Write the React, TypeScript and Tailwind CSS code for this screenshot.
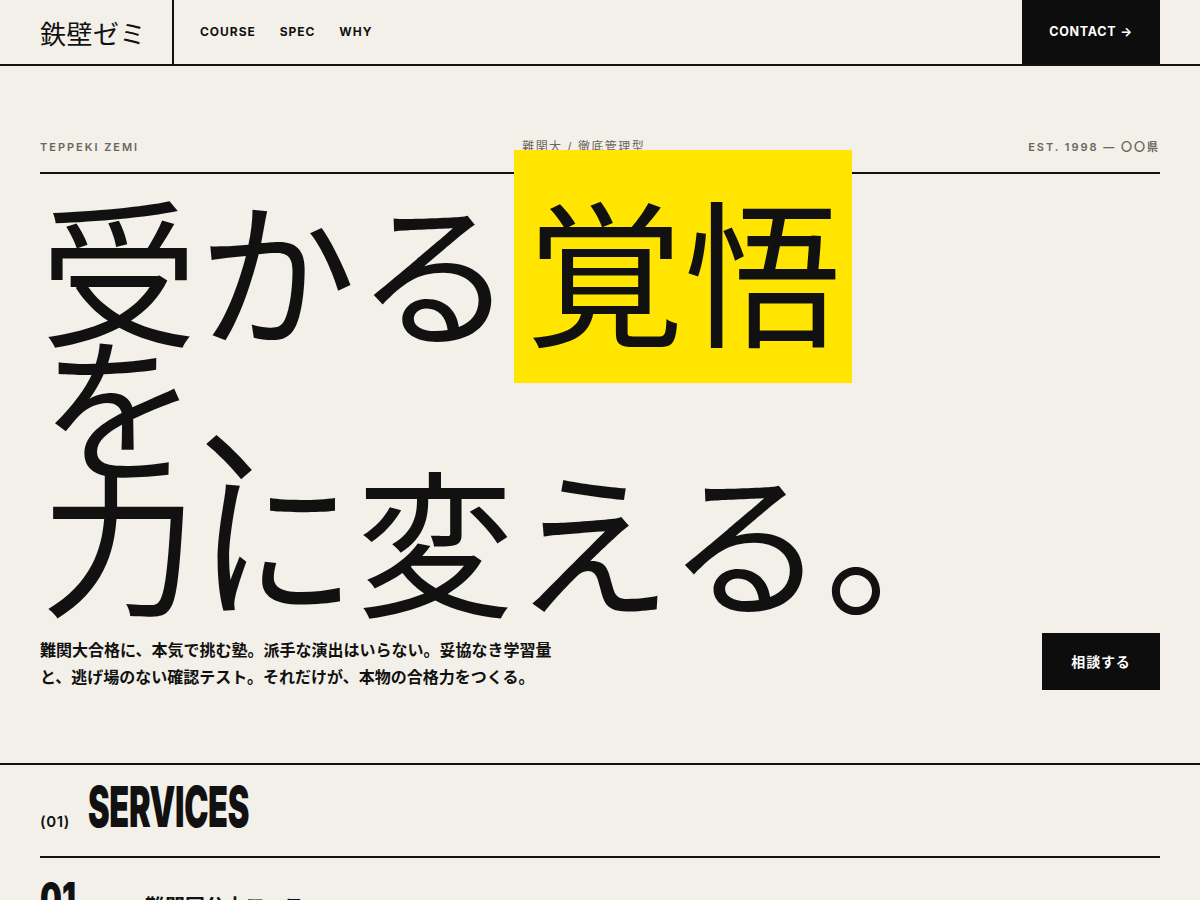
import React from "react";

const NAV = ["COURSE", "SPEC", "WHY"];

export default function App() {
  return (
    <div className="min-h-screen bg-[#f3f0e9] text-[#111] font-['Inter','Noto_Sans_CJK_JP',sans-serif]">
      {/* Header */}
      <header className="flex h-[66px] border-b-2 border-[#111]">
        <div className="w-[174px] pl-10 flex items-center border-r-2 border-[#111]">
          <span className="text-[26px] font-['Noto_Sans_CJK_JP',sans-serif] tracking-[0.02em]">鉄壁ゼミ</span>
        </div>
        <nav className="flex items-center gap-6 pl-[26px]">
          {NAV.map(n => (
            <a key={n} className="text-[12px] font-bold tracking-[0.08em]">{n}</a>
          ))}
        </nav>
        <a className="ml-auto mr-10 w-[138px] bg-[#0d0d0d] text-white flex items-center justify-center text-[12.5px] font-bold tracking-[0.06em]">
          CONTACT →
        </a>
      </header>

      {/* Hero */}
      <section className="px-10 pt-[73px] pb-[73px] border-b-2 border-[#111]">
        <div className="flex justify-between items-center pb-[17px] border-b-2 border-[#111] text-[11px] leading-4 font-semibold tracking-[0.18em] text-[#6b665f]">
          <span>TEPPEKI ZEMI</span>
          <span className="text-[12px] font-normal tracking-[0.12em]">難関大 / 徹底管理型</span>
          <span>EST. 1998 — 〇〇県</span>
        </div>

        <h1 className="mt-[25px] font-['Noto_Sans_CJK_JP',sans-serif] font-normal text-[158px] leading-[135px]">
          受かる<span className="bg-[#ffe500] pl-[12px] pr-[10px] py-[2px]">覚悟</span>
          <br />
          を、
          <br />
          力に変える。
        </h1>

        <div className="mt-[29px] flex justify-between items-end">
          <p className="w-[520px] text-[16px] leading-[27px] font-bold font-['Noto_Sans_CJK_JP',sans-serif]">
            難関大合格に、本気で挑む塾。派手な演出はいらない。妥協なき学習量と、逃げ場のない確認テスト。それだけが、本物の合格力をつくる。
          </p>
          <button className="bg-[#0d0d0d] text-white h-[57px] w-[118px] text-[14px] font-bold tracking-[0.06em] font-['Noto_Sans_CJK_JP',sans-serif]">
            相談する
          </button>
        </div>
      </section>

      {/* Services */}
      <section className="px-10">
        <div className="flex items-baseline gap-[18px] pt-[14px] pb-[21px] border-b-2 border-[#111]">
          <span className="text-[15px] font-semibold tracking-[0.04em]">(01)</span>
          <span className="inline-block origin-left scale-x-[0.58] text-[56px] leading-[56px] font-black tracking-[-0.01em]">
            SERVICES
          </span>
        </div>
        <div className="flex items-baseline pt-[18px]">
          <span className="w-[105px] inline-block origin-left scale-x-[0.7] text-[44px] leading-[44px] font-black">01</span>
          <span className="w-[375px] text-[20px] font-bold font-['Noto_Sans_CJK_JP',sans-serif]">難関国公立コース</span>
          <span className="flex-1 text-[14px] text-[#333] font-['Noto_Sans_CJK_JP',sans-serif]">
            東大・京大・旧帝大をめざす。二次記述まで徹底演習で仕上げる。
          </span>
          <span className="text-[13px] font-['Noto_Sans_CJK_JP',sans-serif]">高1〜高3対象</span>
        </div>
      </section>
    </div>
  );
}
